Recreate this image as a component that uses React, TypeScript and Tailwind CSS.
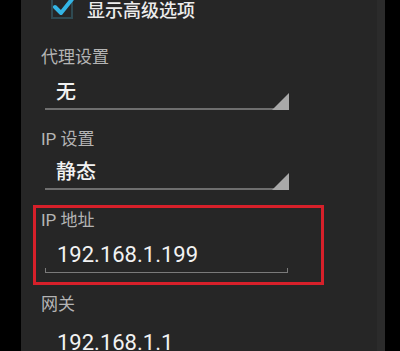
const font = { fontFamily: 'Roboto, "Noto Sans CJK SC", sans-serif' };

function Spinner({ value }: { value: string }) {
  return (
    <div className="relative ml-[24px] h-[32px] w-[244px] border-b-2 border-[#6e6e6e]">
      <div className="pl-[11px] pt-[2px] text-[20px] leading-[24px] font-medium text-[#f2f2f2]">{value}</div>
      <div className="absolute right-0 bottom-[-2px] h-[17px] w-[17px] bg-[#a8a8a8] [clip-path:polygon(100%_0,100%_100%,0_100%)]" />
    </div>
  );
}

function Label({ text }: { text: string }) {
  return <div className="h-[20px] text-[17px] leading-[20px] text-[#b4b4b4]">{text}</div>;
}

export default function App() {
  return (
    <div className="flex h-[351px] w-[400px] overflow-hidden bg-black" style={font}>
      <div className="w-[21px] shrink-0" />
      <div className="flex w-[364px] shrink-0 bg-[#262626]">
        <div className="flex-1">
          {/* advanced options checkbox */}
          <div className="flex h-[22px] items-start">
            <svg className="ml-[29px] mt-[-6px] shrink-0" width="26" height="26" viewBox="0 0 26 26">
              <rect x="2" y="4" width="20" height="20" fill="none" stroke="#2f4a52" strokeWidth="2" />
              <path d="M5 13 L11 19 L23 4" fill="none" stroke="#33b5e5" strokeWidth="4" strokeLinecap="round" strokeLinejoin="round" />
            </svg>
            <div className="ml-[11px] text-[18px] leading-[22px] font-medium text-[#ececec]">显示高级选项</div>
          </div>

          <div className="mt-[25px] pl-[20px]">
            <Label text="代理设置" />
          </div>
          <div className="mt-[11px]">
            <Spinner value="无" />
          </div>

          <div className="mt-[19px] pl-[20px]">
            <Label text="IP 设置" />
          </div>
          <div className="mt-[9px]">
            <Spinner value="静态" />
          </div>

          {/* highlighted ip address field */}
          <div className="ml-[12px] mt-[15px] h-[80px] w-[291px] border-[3px] border-[#d6202a]">
            <div className="mt-[2px] pl-[5px]">
              <Label text="IP 地址" />
            </div>
            <div className="relative ml-[9px] mt-[11px] h-[32px] w-[243px]">
              <div className="pl-[12px] text-[22px] leading-[28px] text-[#f2f2f2]">192.168.1.199</div>
              <div className="absolute bottom-0 left-0 h-[5px] w-full border-x border-b border-[#7a7a7a]" />
            </div>
          </div>

          <div className="mt-[9px] pl-[20px]">
            <Label text="网关" />
          </div>
          <div className="ml-[24px] mt-[15px] pl-[12px] text-[22px] leading-[28px] text-[#f2f2f2]">192.168.1.1</div>
        </div>
        <div className="w-[8px] shrink-0 bg-[#2b2b2b]" />
      </div>
    </div>
  );
}
